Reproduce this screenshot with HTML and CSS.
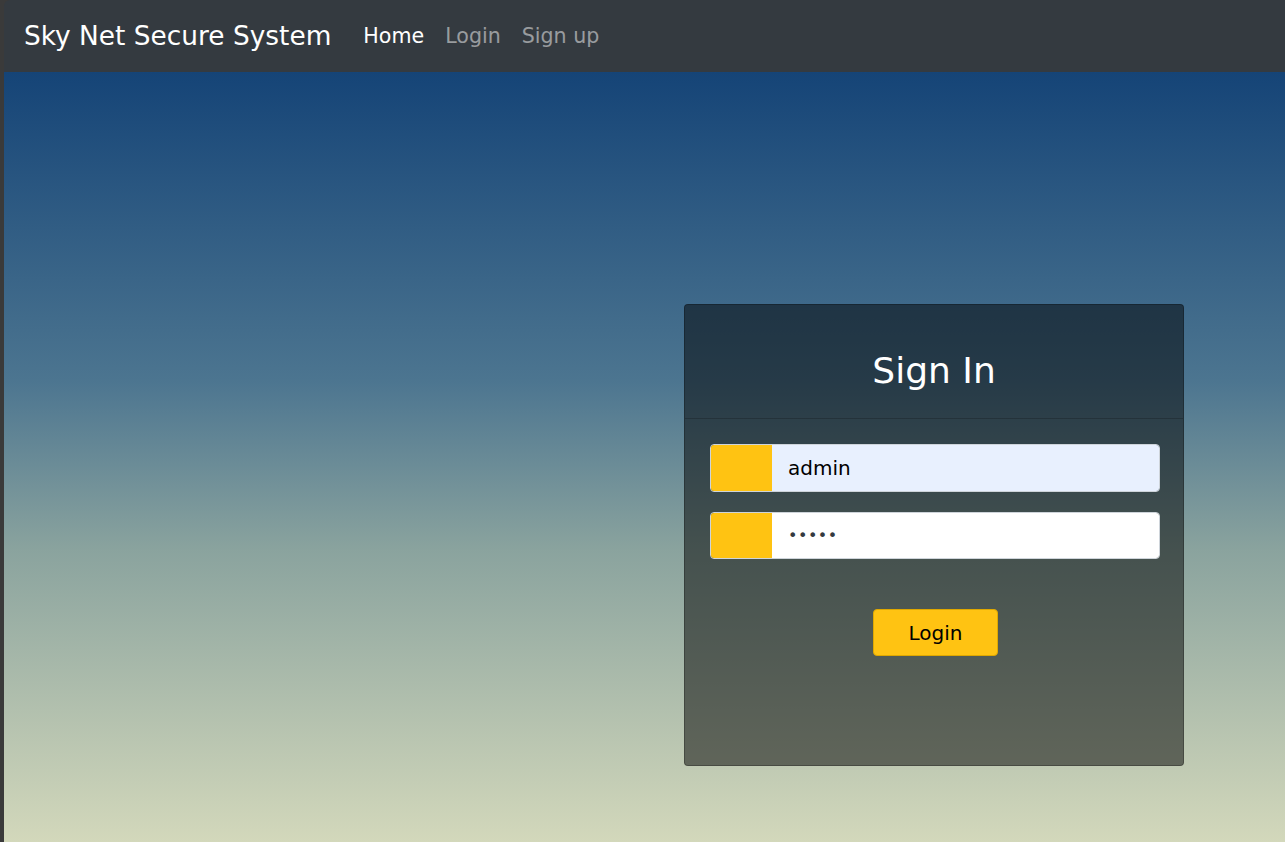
FILE: index.html
```html
<!DOCTYPE html>
<html lang="en">
<head>
<meta charset="utf-8">
<title>Sky Net Secure System</title>
<link rel="stylesheet" href="styles.css">
</head>
<body>
<div class="frame">
  <nav class="navbar">
    <a class="brand" href="#">Sky Net Secure System</a>
    <ul class="nav">
      <li><a class="nav-link active" href="#">Home</a></li>
      <li><a class="nav-link" href="#">Login</a></li>
      <li><a class="nav-link" href="#">Sign up</a></li>
    </ul>
  </nav>
  <main class="hero">
    <div class="card">
      <div class="card-header">
        <h3>Sign In</h3>
      </div>
      <div class="card-body">
        <div class="input-group">
          <span class="addon"></span>
          <input class="field autofill" type="text" value="admin">
        </div>
        <div class="input-group">
          <span class="addon"></span>
          <input class="field pw" type="password" value="admin">
        </div>
        <div class="actions">
          <button class="btn" type="button">Login</button>
        </div>
      </div>
    </div>
  </main>
</div>
</body>
</html>
```
FILE: styles.css
```css
* { box-sizing: border-box; }
html, body { margin: 0; height: 100%; }
body {
  font-family: "DejaVu Sans", "Noto Sans", sans-serif;
  background: #3a3a3a;
}
.frame {
  margin-left: 4px;
  height: 842px;
  display: flex;
  flex-direction: column;
}
.navbar {
  height: 72px;
  background: #343a40;
  display: flex;
  align-items: center;
  padding: 0 20px;
  flex: none;
  border-top-left-radius: 6px;
}
.brand {
  color: #fff;
  text-decoration: none;
  font-size: 26.4px;
  margin-right: 32px;
  line-height: 1;
}
.nav { list-style: none; margin: 0; padding: 0; display: flex; gap: 21px; }
.nav-link {
  color: rgba(255,255,255,0.5);
  text-decoration: none;
  font-size: 20.6px;
}
.nav-link.active { color: #fff; }
.hero {
  flex: 1;
  background: linear-gradient(to bottom, #154477 0%, #4c7590 40%, #8aa39e 62%, #d3d8bb 100%);
  display: flex;
  justify-content: flex-end;
  padding: 232px 101px 0 0;
}
.card {
  width: 500px;
  height: 462px;
  background: rgba(0,0,0,0.5);
  border: 1px solid rgba(0,0,0,0.25);
  border-radius: 4px;
}
.card-header {
  height: 114px;
  border-bottom: 1px solid rgba(0,0,0,0.2);
  display: flex;
  align-items: center;
  justify-content: center;
}
.card-header h3 {
  margin: 0;
  color: #fff;
  font-weight: 400;
  font-size: 36px;
  padding-top: 18px;
}
.card-body { padding: 25px 23px 0 25px; }
.input-group {
  display: flex;
  height: 48px;
  margin-bottom: 20px;
  border-radius: 4px;
  overflow: hidden;
  border: 1px solid #ced4da;
}
.input-group + .input-group { height: 47px; }
.addon {
  width: 61px;
  background: #ffc312;
  flex: none;
}
.field {
  flex: 1;
  border: 0;
  outline: 0;
  padding: 0 16px;
  font-family: inherit;
  font-size: 20px;
  color: #212529;
  background: #fff;
}
.field.pw { font-size: 16px; color: #343a40; letter-spacing: 0.5px; }
.field.autofill { background: #e8f0fe; color: #000; }
.actions {
  display: flex;
  justify-content: center;
  padding: 30px 0 0 1px;
}
.btn {
  width: 125px;
  height: 47px;
  background: #ffc312;
  border: 1px solid #e0a800;
  border-radius: 4px;
  font-family: inherit;
  font-size: 20px;
  color: #000;
}
```
